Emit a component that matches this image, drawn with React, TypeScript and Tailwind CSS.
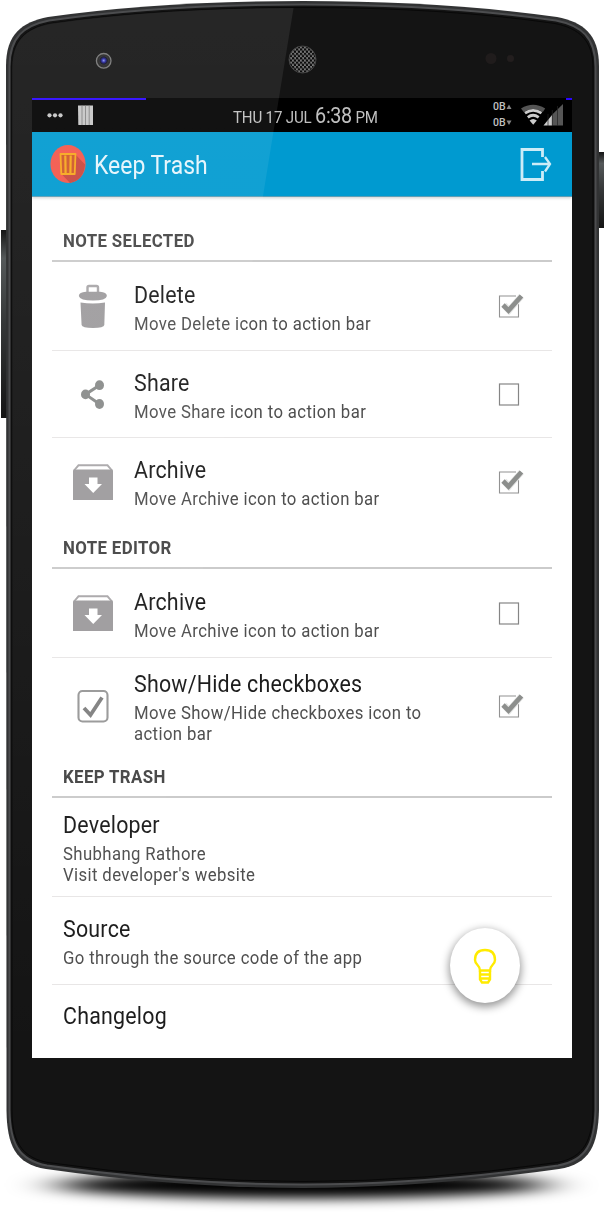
import React from "react";

type IconName = "trash" | "share" | "archive" | "check";

function RowIcon({ name }: { name: IconName }) {
  if (name === "trash")
    return (
      <svg width="40" height="46" viewBox="0 0 40 46" fill="#9e9c9e">
        <path d="M14.500 9V4.500Q14.500 3 16 3H23.500Q25 3 25 4.500V9" fill="none" stroke="#a9a7a9" strokeWidth="2.400" />
        <path d="M5.800 13Q6 9.300 13 8.800H27Q33.700 9.300 33.900 13Q33 17.500 20 17.500Q7 17.500 5.800 13Z" />
        <path d="M7.500 19.500Q20 21.500 32 19.500L31.300 42Q31 45 20 45Q9 45 8.600 42Z" />
      </svg>
    );
  if (name === "share")
    return (
      <svg width="40" height="46" viewBox="0 0 40 46" fill="#8a8c8b">
        <path d="M26.500 14.200L12.500 23.400L26.500 33" fill="none" stroke="#8a8c8b" strokeWidth="3" />
        <ellipse cx="26.500" cy="14.200" rx="4.500" ry="4.900" />
        <ellipse cx="12.500" cy="23.400" rx="4.500" ry="4.900" />
        <ellipse cx="26.500" cy="33" rx="4.500" ry="4.900" />
      </svg>
    );
  if (name === "archive")
    return (
      <svg width="40" height="46" viewBox="0 0 40 46">
        <path d="M1 11.500L5.500 6.300H34.500L39 11.500" fill="none" stroke="#aaa8aa" strokeWidth="1.900" />
        <path d="M0 11.500Q0 10.500 1.500 10.500H38.500Q40 10.500 40 11.500V41H0Z" fill="#9e9c9e" />
        <path d="M16 18.500H24.500V25H29L20.200 34L11.500 25H16Z" fill="#fff" />
      </svg>
    );
  return (
    <svg width="40" height="46" viewBox="0 0 40 46" fill="none">
      <rect x="5.500" y="8" width="29" height="30.500" rx="4" stroke="#999" strokeWidth="2.100" />
      <path d="M11 25L17.500 32L29 14.500" stroke="#828282" strokeWidth="3.800" />
    </svg>
  );
}

function Checkbox({ checked }: { checked: boolean }) {
  return (
    <svg width="28" height="30" viewBox="0 0 28 30" fill="none" className="shrink-0">
      {checked ? (
        <>
          <path d="M19 5H2.500V26H21.500V13" stroke="#929292" strokeWidth="1.100" />
          <path d="M7 14L12 19.500L24.500 5" stroke="#e6e7e6" strokeWidth="6.400" />
          <path d="M6 14L11.500 19.500L24.500 5" stroke="#8c8e8c" strokeWidth="4.700" />
        </>
      ) : (
        <rect x="2.500" y="5" width="19" height="21" stroke="#858585" strokeWidth="1.200" />
      )}
    </svg>
  );
}

function SectionTitle({ children, className }: { children: React.ReactNode; className: string }) {
  return (
    <div className={`flex items-end border-b-2 border-[#cbcbcb] pl-[11px] ${className}`}>
      <h2 className="origin-left scale-x-[.925] whitespace-nowrap text-[18.200px] leading-[22px] font-bold tracking-[.400px] text-[#464646]">
        {children}
      </h2>
    </div>
  );
}

function Copy({ title, lines }: { title: string; lines: string[] }) {
  return (
    <div className="min-w-0 flex-1 whitespace-nowrap">
      <div className="mb-[2px] origin-left scale-x-[.91] text-[23.500px] leading-[31px] tracking-[.250px] text-[#1c1c1c]">{title}</div>
      {lines.map((line) => (
        <div key={line} className="origin-left scale-x-[.915] text-[18.300px] leading-[21.300px] tracking-[.420px] text-[#4f4f4f]">
          {line}
        </div>
      ))}
    </div>
  );
}

function Setting({
  icon, title, lines, checked, className,
}: { icon: IconName; title: string; lines: string[]; checked: boolean; className: string }) {
  return (
    <div className={`flex pl-[21px] ${className}`}>
      <div className="flex w-[60.500px] shrink-0 items-center">
        <RowIcon name={icon} />
      </div>
      <Copy title={title} lines={lines} />
      <div className="flex w-[55px] shrink-0 items-center">
        <Checkbox checked={checked} />
      </div>
    </div>
  );
}

function StatusBar() {
  return (
    <div className="flex h-[34px] shrink-0 flex-col bg-black text-[#c0c0c0]">
      <div className="flex h-[2px] justify-between">
        <div className="h-[2px] w-[114px] bg-[#2a05ff]" />
        <div className="h-[2px] w-[6px] bg-[#2a05ff]" />
      </div>
      <div className="flex h-[32px]">
        <svg width="201" height="31" viewBox="0 0 201 31" fill="#c6c6c6" className="shrink-0">
          <circle cx="17.500" cy="15.300" r="2.100" />
          <circle cx="23" cy="15.300" r="2.100" />
          <circle cx="28.500" cy="15.300" r="2.100" />
          <path d="M46 5.500H61V25H46.300Z" />
          <path d="M50 5.500V25M53.500 5.500V25M57.200 5.500V25" stroke="#777" strokeWidth=".8" />
        </svg>
        <div className="flex w-[260px] origin-left scale-x-[.9] items-baseline gap-[4px] whitespace-nowrap text-[16.800px] leading-[32px] tracking-[-.2px]">
          <span>THU 17 JUL</span>
          <span className="text-[22px] tracking-[-.4px]">6:38</span>
          <span>PM</span>
        </div>
        <div className="flex w-[28px] shrink-0 flex-col text-[10.500px] leading-[16px] font-medium">
          <div className="flex h-[14.500px] items-center">
            <span>0B</span>
            <svg width="6" height="6" viewBox="0 0 6 6"><path d="M.5 5L3 .5L5.500 5Z" fill="#888" /></svg>
          </div>
          <div className="flex h-[17px] items-center">
            <span>0B</span>
            <svg width="6" height="6" viewBox="0 0 6 6"><path d="M.5 .5L3 5L5.500 .5Z" fill="#888" /></svg>
          </div>
        </div>
        <svg width="44" height="32" viewBox="0 0 44 32" fill="none" className="shrink-0">
          <path d="M0 8.500Q12 1 24.200 8.500L21.900 12Q12 5.800 2.700 12Z" fill="#545454" />
          <path d="M4 13.200Q12 7.600 20.500 13.200" stroke="#ccc" strokeWidth="2.800" />
          <path d="M6.800 17.300Q12 13.300 17.700 17.300" stroke="#ccc" strokeWidth="2.800" />
          <path d="M8.600 20.500Q12 17.500 15.800 20.500L12.200 24.800Z" fill="#ccc" />
          <path d="M22.500 25.500L31 15V25.500Z" fill="#ccc" />
          <path d="M31 25.500V14.700L42 4V25.500Z" fill="#555" />
          <path d="M27 14V26M31.300 10V26M36.500 6V26" stroke="#222" strokeWidth=".7" />
        </svg>
      </div>
    </div>
  );
}

function ActionBar() {
  return (
    <header className="z-10 flex h-[65px] shrink-0 items-center border-b border-[#5e9eb5] bg-[#009ad0] pl-[18px] shadow-[0_1px_3px_rgba(0,0,0,.2)]">
      <svg width="36" height="40" viewBox="0 0 36 40" className="shrink-0">
        <ellipse cx="18" cy="20" rx="17.600" ry="19" fill="#f3574b" />
        <path d="M26 11L35 20.500Q34 36 20 39L11 29.500H25Z" fill="#c9463d" />
        <path d="M10.500 10H25.500L24.700 30H11.300Z" fill="#cf5728" stroke="#f7a71c" strokeWidth="1.800" strokeLinejoin="round" />
        <path d="M15.300 11.500L15.600 29M20.700 11.500L20.400 29" stroke="#f7a71c" strokeWidth="2.200" />
      </svg>
      <h1 className="ml-[8px] flex-1 origin-left scale-x-[.91] whitespace-nowrap pt-[4px] text-[25.200px] leading-[60px] text-[#e5f5fc]">Keep Trash</h1>
      <svg width="53" height="40" viewBox="0 0 53 40" fill="none" stroke="#cdecf7" className="shrink-0">
        <path d="M23.500 13V5.500H3V35.500H23.500V27" strokeWidth="2.800" />
        <path d="M13 20H31M26 13L31 20L26 27.500" strokeWidth="2.300" />
      </svg>
    </header>
  );
}

function Phone() {
  return (
    <svg width="605" height="1228" viewBox="0 0 605 1228" className="absolute inset-0">
      <defs>
        <filter id="soft" x="-20%" y="-100%" width="140%" height="300%">
          <feGaussianBlur stdDeviation="24 6" />
        </filter>
        <linearGradient id="key" x2="0" y2="1">
          <stop stopColor="#151515" />
          <stop offset=".15" stopColor="#55595a" />
          <stop offset=".5" stopColor="#353738" />
          <stop offset="1" stopColor="#151515" />
        </linearGradient>
        <pattern id="grille" width="4" height="4.400" patternUnits="userSpaceOnUse">
          <rect width="4" height="4.400" fill="#777" />
          <circle cx="1" cy="1.100" r="1.250" fill="#0b0b0b" />
          <circle cx="3" cy="3.300" r="1.250" fill="#0b0b0b" />
        </pattern>
        <radialGradient id="lens">
          <stop offset="0" stopColor="#8997f5" />
          <stop offset=".4" stopColor="#23239c" />
          <stop offset=".75" stopColor="#10101e" />
          <stop offset="1" stopColor="#333" />
        </radialGradient>
      </defs>
      <ellipse cx="302" cy="1185" rx="245" ry="13.500" fill="#000" filter="url(#soft)" />
      <rect x="1" y="230" width="7" height="188" fill="url(#key)" />
      <rect x="597" y="152" width="7" height="76" fill="url(#key)" />
      <path d="M6 66C6 34 22 22 48 17Q160 1 303 1Q445 1 557 17C583 22 599 34 599 66V1110C598 1145 590 1164 559 1169Q425 1188 303 1188Q180 1188 46 1169C15 1164 7 1145 6.500 1110Z" fill="#323334" />
      <path d="M9.500 67C9.500 37 24 25.500 49 20.500Q160 4.500 303 4.500Q445 4.500 556 20.500C581 25.500 595.500 37 595.500 67V1110C594.500 1142 587 1160.500 558 1165.500Q425 1184.500 303 1184.500Q180 1184.500 47 1165.500C18 1160.500 10 1142 9.500 1110Z" fill="#141414" stroke="#4c4d4f" strokeWidth="2" />
      <path d="M12 68C12 40 26 28.500 50 23.500Q160 7.500 303 7.500Q445 7.500 555 23.500C579 28.500 593 40 593 68V1110C592 1139 585 1157.500 557 1162.500Q425 1181.500 303 1181.500Q180 1181.500 48 1162.500C20 1157.500 12 1139 12 1110Z" fill="#141414" stroke="#080808" strokeWidth="1" />
      <circle cx="103.700" cy="60.800" r="7.300" fill="#242424" stroke="#777" strokeWidth="1.300" />
      <circle cx="103.700" cy="60.500" r="4.800" fill="url(#lens)" />
      <circle cx="302.500" cy="59.500" r="13.500" fill="url(#grille)" stroke="#444" strokeWidth="1" />
      <circle cx="491" cy="58.500" r="5.500" fill="#201c1c" />
      <circle cx="510.500" cy="58.500" r="3.500" fill="#231e1e" />
    </svg>
  );
}

function Gloss() {
  return (
    <svg width="605" height="1228" viewBox="0 0 605 1228" className="pointer-events-none absolute inset-0 z-30">
      <defs>
        <linearGradient id="gloss" x2="0" y2="1">
          <stop stopColor="#fff" stopOpacity=".078" />
          <stop offset=".2" stopColor="#fff" stopOpacity=".065" />
          <stop offset="1" stopColor="#fff" stopOpacity="0" />
        </linearGradient>
      </defs>
      <path d="M12 68C12 40 26 28.500 50 23.500Q160 8 293.500 8L263 196L124 1058H12Z" fill="url(#gloss)" />
    </svg>
  );
}

export default function App() {
  return (
    <div className="relative h-[1228px] w-[605px] overflow-hidden bg-white pt-[98px] pl-[32px] font-[Roboto,'Liberation_Sans',sans-serif]">
      <Phone />
      <main className="relative flex h-[960px] w-[540px] flex-col overflow-hidden bg-white">
        <StatusBar />
        <ActionBar />
        <div className="flex flex-col px-[20px]">
          <SectionTitle className="h-[65px] pb-[8px]">NOTE SELECTED</SectionTitle>
          <Setting className="h-[89px] border-b border-[#e8e6e6] pt-[18px] [&>div:first-child]:-mt-[18px] [&>div:last-child]:-mt-[18px]" icon="trash" title="Delete" lines={["Move Delete icon to action bar"]} checked />
          <Setting className="h-[87px] border-b border-[#e8e6e6] pt-[17px] [&>div:first-child]:-mt-[17px] [&>div:last-child]:-mt-[17px]" icon="share" title="Share" lines={["Move Share icon to action bar"]} checked={false} />
          <Setting className="h-[87px] pt-[17px] [&>div:first-child]:-mt-[17px] [&>div:last-child]:-mt-[17px]" icon="archive" title="Archive" lines={["Move Archive icon to action bar"]} checked />
          <SectionTitle className="h-[44px] pb-[8px]">NOTE EDITOR</SectionTitle>
          <Setting className="h-[89px] border-b border-[#e8e6e6] pt-[18px] [&>div:first-child]:-mt-[18px] [&>div:last-child]:-mt-[18px]" icon="archive" title="Archive" lines={["Move Archive icon to action bar"]} checked={false} />
          <Setting className="h-[96px] pt-[11px] [&>div:first-child]:-mt-[11px] [&>div:last-child]:-mt-[11px]" icon="check" title="Show/Hide checkboxes" lines={["Move Show/Hide checkboxes icon to", "action bar"]} checked />
          <SectionTitle className="h-[44px] pb-[8px]">KEEP TRASH</SectionTitle>
          <div className="flex h-[99px] border-b border-[#e8e6e6] pt-[12px] pl-[11px]">
            <Copy title="Developer" lines={["Shubhang Rathore", "Visit developer's website"]} />
          </div>
          <div className="flex h-[88px] border-b border-[#e8e6e6] pt-[17px] pl-[11px]">
            <Copy title="Source" lines={["Go through the source code of the app"]} />
          </div>
          <div className="flex pt-[16px] pl-[11px]">
            <Copy title="Changelog" lines={[]} />
          </div>
        </div>
        <button className="absolute top-[830px] left-[418px] flex h-[75px] w-[70px] items-center justify-center rounded-[50%] bg-white shadow-[0_3px_9px_1px_rgba(0,0,0,.42)]">
          <svg width="24" height="38" viewBox="0 0 24 38" fill="none" stroke="#ffeb00" strokeWidth="2.400">
            <path d="M7 23.500Q7 20.500 4.500 18Q2 15.500 2 13Q2 3 12 3Q22 3 22 13Q22 15.500 19.500 18Q17 20.500 17 23.500Z" />
            <path d="M7 23.500V32.500L9 35.500H15L17 32.500V23.500M7 27.500H17M7 31.500H17" strokeWidth="2.400" />
          </svg>
        </button>
      </main>
      <Gloss />
    </div>
  );
}
